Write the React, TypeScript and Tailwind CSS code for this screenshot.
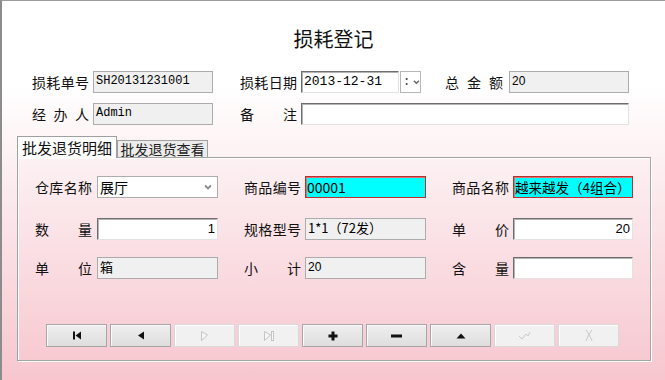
import React from "react";

const cjk = { fontFamily: '"Noto Sans CJK SC", "Noto Sans", sans-serif' };
const mono = { fontFamily: '"Liberation Mono", "Noto Sans CJK SC", monospace' };
const sans = { fontFamily: '"Liberation Sans", "Noto Sans CJK SC", sans-serif' };

// full-width brackets keep their em box, as in the old Windows form
function Wide({ text }: { text: string }) {
  return (
    <>
      {text.split(/([（）])/).map((part, i) =>
        part === "（" ? (
          <span key={i} className="inline-block w-[1em] text-right">
            {part}
          </span>
        ) : part === "）" ? (
          <span key={i} className="inline-block w-[1em] text-left">
            {part}
          </span>
        ) : (
          <span key={i}>{part}</span>
        )
      )}
    </>
  );
}

function Label({ text, className = "" }: { text: string; className?: string }) {
  return (
    <div
      className={`flex h-[22px] w-[57px] shrink-0 items-center justify-between text-[14px] leading-none text-[#111] ${className}`}
      style={cjk}
    >
      {text.split("").map((c, i) => (
        <span key={i}>{c}</span>
      ))}
    </div>
  );
}

function ReadOnly({
  value,
  className = "",
  font = sans,
}: {
  value: string;
  className?: string;
  font?: React.CSSProperties;
}) {
  return (
    <div
      className={`h-[22px] shrink-0 whitespace-nowrap border border-[#acacac] bg-[#f0f0f0] pl-[2px] pt-[2px] text-[12px] leading-[14px] text-black ${className}`}
      style={font}
    >
      <Wide text={value} />
    </div>
  );
}

function Inset({
  value = "",
  className = "",
  font = sans,
}: {
  value?: string;
  className?: string;
  font?: React.CSSProperties;
}) {
  return (
    <div
      className={`flex h-[22px] shrink-0 items-center border border-t-[#6e6e6e] border-l-[#6e6e6e] border-r-[#e2e2e2] border-b-[#e2e2e2] bg-white px-[2px] text-[13px] text-black shadow-[inset_1px_1px_0_#b4b4b4] ${className}`}
      style={font}
    >
      {value}
    </div>
  );
}

function Cyan({ value, className = "" }: { value: string; className?: string }) {
  return (
    <div
      className={`flex h-[22px] shrink-0 items-center whitespace-nowrap border border-[#b8312f] bg-[#00ffff] pl-[1px] text-black shadow-[inset_1px_1px_0_#e07070] ${className}`}
      style={cjk}
    >
      <Wide text={value} />
    </div>
  );
}

function Chevron({ color = "#7a7a7a" }: { color?: string }) {
  return (
    <svg width="8" height="6" viewBox="0 0 8 6">
      <polyline points="1,1.5 4,4.5 7,1.5" fill="none" stroke={color} strokeWidth="1.8" />
    </svg>
  );
}

function ToolButton({ disabled, children }: { disabled?: boolean; children: React.ReactNode }) {
  return (
    <div
      className={
        disabled
          ? "flex h-[23px] w-[61px] items-center justify-center border border-[#d9d9d9] bg-[#f1f1f1] shadow-[inset_1px_1px_0_#fff]"
          : "flex h-[23px] w-[61px] items-center justify-center border border-[#a6a6a6] bg-gradient-to-b from-[#efefef] to-[#dedede] shadow-[inset_1px_1px_0_#fafafa]"
      }
    >
      {children}
    </div>
  );
}

const icons = {
  first: (
    <svg width="10" height="9" viewBox="0 0 10 9">
      <rect x="1" y="0.5" width="2" height="8" fill="#111" />
      <polygon points="9,0.5 9,8.5 3.5,4.5" fill="#111" />
    </svg>
  ),
  prev: (
    <svg width="8" height="9" viewBox="0 0 8 9">
      <polygon points="7,0.5 7,8.5 1,4.5" fill="#111" />
    </svg>
  ),
  next: (
    <svg width="9" height="10" viewBox="0 0 9 10">
      <polygon points="1.5,0.5 1.5,9.5 7.5,4" fill="#f6f6f6" stroke="#c4c4c4" strokeWidth="1" />
    </svg>
  ),
  last: (
    <svg width="12" height="10" viewBox="0 0 12 10">
      <polygon points="1.5,0.5 1.5,9.5 7.5,4" fill="#f6f6f6" stroke="#c4c4c4" strokeWidth="1" />
      <rect x="8.5" y="0.5" width="2" height="9" fill="#f6f6f6" stroke="#c4c4c4" strokeWidth="1" />
    </svg>
  ),
  add: (
    <svg width="10" height="10" viewBox="0 0 10 10">
      <rect x="3.5" y="0.5" width="3" height="9" fill="#111" />
      <rect x="0.5" y="3.5" width="9" height="3" fill="#111" />
    </svg>
  ),
  remove: (
    <svg width="11" height="4" viewBox="0 0 11 4">
      <rect x="0" y="0.5" width="11" height="3" fill="#111" />
    </svg>
  ),
  up: (
    <svg width="10" height="6" viewBox="0 0 10 6">
      <polygon points="0.5,5.5 9.5,5.5 5,0.5" fill="#111" />
    </svg>
  ),
  check: (
    <svg width="13" height="9" viewBox="0 0 13 9">
      <polyline points="1,5 4,8 8,3 10,5 12,1" fill="none" stroke="#c8c8c8" strokeWidth="1" />
    </svg>
  ),
  cancel: (
    <svg width="10" height="13" viewBox="0 0 10 13">
      <path d="M2 1 Q6 6 8 12 M8 1 Q4 6 2 12" fill="none" stroke="#c8c8c8" strokeWidth="1" />
    </svg>
  ),
};

export default function App() {
  return (
    <div className="h-[380px] w-[665px] overflow-hidden border-l-2 border-t border-l-[#8c8c8c] border-t-[#9a9a9a] bg-[linear-gradient(to_bottom,#ffffff_0%,#ffffff_22%,#fbe7ea_55%,#f7c6cf_100%)]">
      {/* title */}
      <div className="mt-[25px] h-[26px] text-center text-[20px] leading-[26px] text-[#111]" style={cjk}>
        损耗登记
      </div>

      {/* header row 1 */}
      <div className="mt-[19px] flex items-center pl-[30px]">
        <Label text="损耗单号" />
        <ReadOnly value="SH20131231001" className="ml-[4px] w-[120px]" font={mono} />
        <Label text="损耗日期" className="ml-[27px]" />
        <Inset value="2013-12-31" className="ml-[4px] w-[98px] text-[12px]" font={mono} />
        <div className="ml-[1px] flex h-[22px] w-[21px] items-center gap-[3px] border border-[#b6b6b6] bg-white pl-[2px] text-[12px] text-[#333]" style={mono}>
          <span className="leading-none">:</span>
          <Chevron color="#6a6a6a" />
        </div>
        <Label text="总金额" className="ml-[24px] w-[58px]" />
        <ReadOnly value="20" className="ml-[6px] w-[120px]" />
      </div>

      {/* header row 2 */}
      <div className="mt-[10px] flex items-center pl-[30px]">
        <Label text="经办人" />
        <ReadOnly value="Admin" className="ml-[4px] w-[120px]" font={mono} />
        <Label text="备注" className="ml-[27px]" />
        <Inset className="ml-[4px] w-[328px]" />
      </div>

      {/* tabs */}
      <div className="mt-[11px] flex h-[21px] items-end pl-[15px]" style={cjk}>
        <div className="relative z-10 -mb-px flex h-[22px] w-[100px] items-center justify-center border border-b-0 border-[#a0a0a0] bg-white text-[15px] leading-none text-[#111] shadow-[inset_1px_1px_0_#fff]">
          批发退货明细
        </div>
        <div className="flex h-[17px] w-[91px] items-center justify-center border border-b-0 border-[#a0a0a0] bg-[#ececec] text-[14px] leading-none text-[#222]">
          批发退货查看
        </div>
      </div>

      {/* panel */}
      <div className="ml-[15px] h-[204px] w-[634px] border border-[#a4a4a4] pl-[17px] pt-[18px] shadow-[inset_1px_1px_0_#ffffff,1px_1px_0_#ffffff]">
        <div className="flex items-center">
          <Label text="仓库名称" />
          <div className="ml-[5px] flex h-[22px] w-[121px] items-center justify-between border border-[#adadad] bg-white pl-[2px] pr-[5px] text-[14px] text-black" style={cjk}>
            <span>展厅</span>
            <Chevron color="#8a8a8a" />
          </div>
          <Label text="商品编号" className="ml-[26px]" />
          <Cyan value="00001" className="ml-[4px] w-[121px] text-[14px]" />
          <Label text="商品名称" className="ml-[26px]" />
          <Cyan value="越来越发（4组合）" className="ml-[4px] w-[120px] text-[13.5px]" />
        </div>

        <div className="mt-[20px] flex items-center">
          <Label text="数量" />
          <Inset value="1" className="ml-[5px] w-[121px] justify-end" />
          <Label text="规格型号" className="ml-[26px]" />
          <ReadOnly value="1*1（72发）" className="ml-[4px] w-[121px] text-[13px]" font={cjk} />
          <Label text="单价" className="ml-[26px]" />
          <Inset value="20" className="ml-[4px] w-[120px] justify-end" />
        </div>

        <div className="mt-[17px] flex items-center">
          <Label text="单位" />
          <ReadOnly value="箱" className="ml-[5px] w-[121px] text-[13px]" font={cjk} />
          <Label text="小计" className="ml-[26px]" />
          <ReadOnly value="20" className="ml-[4px] w-[121px]" />
          <Label text="含量" className="ml-[26px]" />
          <Inset className="ml-[4px] w-[120px]" />
        </div>

        <div className="ml-[11px] mt-[45px] flex gap-[3px]">
          <ToolButton>{icons.first}</ToolButton>
          <ToolButton>{icons.prev}</ToolButton>
          <ToolButton disabled>{icons.next}</ToolButton>
          <ToolButton disabled>{icons.last}</ToolButton>
          <ToolButton>{icons.add}</ToolButton>
          <ToolButton>{icons.remove}</ToolButton>
          <ToolButton>{icons.up}</ToolButton>
          <ToolButton disabled>{icons.check}</ToolButton>
          <ToolButton disabled>{icons.cancel}</ToolButton>
        </div>
      </div>
    </div>
  );
}
